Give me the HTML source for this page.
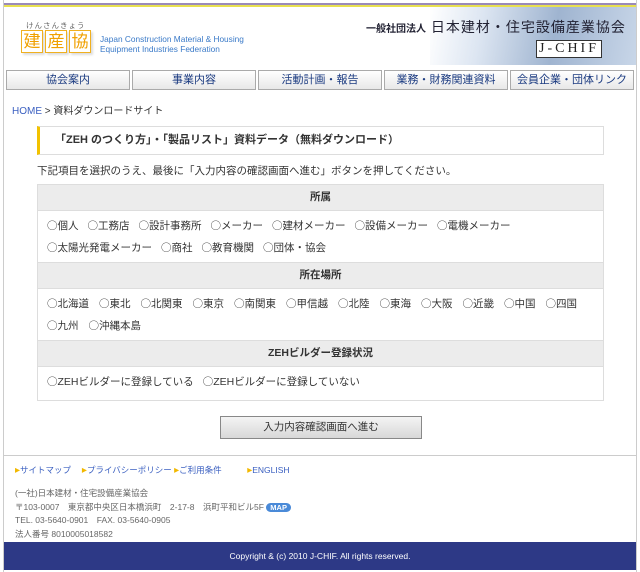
<!DOCTYPE html>
<html><head><meta charset="utf-8"><style>
*{margin:0;padding:0;box-sizing:border-box}
body{width:640px;height:572px;background:#fff;font-family:"Liberation Sans","Noto Sans CJK JP",sans-serif;font-size:10.5px;color:#333;position:relative;overflow:hidden}
.frame{position:absolute;left:3px;top:0;width:634px;height:572px;border-left:1px solid #ccc;border-right:1px solid #ccc}
.abs{position:absolute}
.nav{position:absolute;top:70px;left:6px;width:628px;height:20px;display:flex;gap:2px}
.nav div{flex:1;border:1px solid #aaa;background:linear-gradient(#fff,#e8e8e8);text-align:center;line-height:18px;font-size:11px;color:#1a3a80}
.tb{position:absolute;left:37px;top:184px;width:567px;border:1px solid #ddd}
.th{background:#ececec;text-align:center;font-weight:bold;height:26px;font-size:10.5px;border-bottom:1px solid #ddd}
.td{padding:4px 9px;line-height:21px;border-bottom:1px solid #ddd;font-size:10.5px}
.td span{margin-right:9px;white-space:nowrap}
.td.loc span{margin-right:10px}
.td span::before{content:"○";font-family:"Noto Sans CJK JP",sans-serif;font-size:10.5px}
.ar{color:#f2b800;font-size:10px}
</style></head><body>
<div class="frame"></div>
<div class="abs" style="left:4px;top:3px;width:632px;height:2px;background:#9a8ab8"></div>
<div class="abs" style="left:4px;top:5px;width:632px;height:2px;background:#e8e050"></div>
<div class="abs" style="left:430px;top:7px;width:206px;height:58px;background:linear-gradient(100deg,#fff 0%,#dde6f2 25%,#9fb4d0 60%,#c8d6e8 100%)"></div>
<div class="abs" style="left:26px;top:20px;font-size:7.5px;color:#666;letter-spacing:1px">けんさんきょう</div>
<div class="abs" style="left:21px;top:30px;display:flex;gap:2px">
<span style="width:22px;height:23px;border:1px solid #f0b020;color:#f0a000;font-size:17px;line-height:21px;text-align:center;background:#fff;box-shadow:2px 2px 2px #ddd">建</span>
<span style="width:22px;height:23px;border:1px solid #f0b020;color:#f0a000;font-size:17px;line-height:21px;text-align:center;background:#fff;box-shadow:2px 2px 2px #ddd">産</span>
<span style="width:22px;height:23px;border:1px solid #f0b020;color:#f0a000;font-size:17px;line-height:21px;text-align:center;background:#fff;box-shadow:2px 2px 2px #ddd">協</span></div>
<div class="abs" style="left:100px;top:34px;font-size:8.3px;color:#3a7ac8;line-height:10px;white-space:nowrap">Japan Construction Material &amp; Housing<br>Equipment Industries Federation</div>
<div class="abs" style="left:366px;top:17px;font-size:14px;color:#223;white-space:nowrap;letter-spacing:1px"><span style="font-size:10px;font-weight:bold;letter-spacing:0">一般社団法人</span> 日本建材・住宅設備産業協会</div>
<div class="abs" style="left:536px;top:40px;height:18px;border:1px solid #333;background:#fff;font-size:14px;line-height:16px;padding:0 2px;letter-spacing:3px;font-family:'Liberation Serif',serif;color:#222">J-CHIF</div>
<div class="nav"><div>協会案内</div><div>事業内容</div><div>活動計画・報告</div><div>業務・財務関連資料</div><div>会員企業・団体リンク</div></div>
<div class="abs" style="left:12px;top:102px;font-size:10px"><span style="color:#3a5fc0">HOME</span> &gt; 資料ダウンロードサイト</div>
<div class="abs" style="left:37px;top:126px;width:567px;height:29px;border:1px solid #ddd;border-left:3px solid #f2c200;padding-left:15px;line-height:27px;font-weight:bold;font-size:11px">「ZEH のつくり方」・「製品リスト」資料データ（無料ダウンロード）</div>
<div class="abs" style="left:37px;top:163px;font-size:10.5px">下記項目を選択のうえ、最後に「入力内容の確認画面へ進む」ボタンを押してください。</div>
<div class="tb">
<div class="th" style="line-height:25px">所属</div>
<div class="td" style="height:52px"><span>個人</span><span>工務店</span><span>設計事務所</span><span>メーカー</span><span>建材メーカー</span><span>設備メーカー</span><span>電機メーカー</span><br><span>太陽光発電メーカー</span><span>商社</span><span>教育機関</span><span>団体・協会</span></div>
<div class="th" style="line-height:25px">所在場所</div>
<div class="td loc" style="height:52px"><span>北海道</span><span>東北</span><span>北関東</span><span>東京</span><span>南関東</span><span>甲信越</span><span>北陸</span><span>東海</span><span>大阪</span><span>近畿</span><span>中国</span><span>四国</span><br><span>九州</span><span>沖縄本島</span></div>
<div class="th" style="line-height:25px">ZEHビルダー登録状況</div>
<div class="td" style="height:33px;border-bottom:none"><span>ZEHビルダーに登録している</span><span>ZEHビルダーに登録していない</span></div>
</div>
<div class="abs" style="left:220px;top:416px;width:202px;height:23px;border:1px solid #888;background:linear-gradient(#f4f4f4,#d8d8d8);text-align:center;line-height:21px;font-size:10.5px">入力内容確認画面へ進む</div>
<div class="abs" style="left:4px;top:455px;width:632px;height:1px;background:#ccc"></div>
<div class="abs" style="left:15px;top:464px;font-size:8.5px;color:#3a5fc0;white-space:nowrap"><span class="ar">▸</span>サイトマップ　 <span class="ar">▸</span>プライバシーポリシー <span class="ar">▸</span>ご利用条件　　　<span class="ar">▸</span>ENGLISH</div>
<div class="abs" style="left:15px;top:487px;font-size:8.5px;color:#666;line-height:13.5px;white-space:nowrap">(一社)日本建材・住宅設備産業協会<br>〒103-0007　東京都中央区日本橋浜町　2-17-8　浜町平和ビル5F <span style="background:#4a8ad8;color:#fff;border-radius:6px;padding:0 4px;font-weight:bold;font-size:7.5px">MAP</span><br>TEL. 03-5640-0901　FAX. 03-5640-0905<br>法人番号 8010005018582</div>
<div class="abs" style="left:4px;top:542px;width:632px;height:28px;background:#2d3986;color:#fff;text-align:center;line-height:28px;font-size:8.5px">Copyright &amp; (c) 2010 J-CHIF. All rights reserved.</div>
</body></html>
